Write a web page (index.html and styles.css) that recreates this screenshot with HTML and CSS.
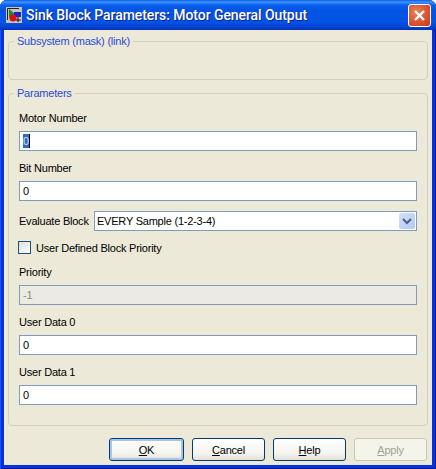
FILE: index.html
```html
<!DOCTYPE html>
<html lang="en">
  <head>
    <meta charset="UTF-8" />
    <title>Sink Block Parameters: Motor General Output</title>
    <link rel="stylesheet" href="styles.css">
  </head>

  <body>
    <div class="ventana">
      <div class="titulo">
        <svg class="titulo-icono" width="16" height="16" viewBox="0 0 16 16">
          <rect width="16" height="16" fill="#c8c4b8" />
          <path d="M1.5 13V1.5H13" fill="none" stroke="#222" />
          <path d="M3 2l6 5-6 4z" fill="#1a8a2a" />
          <rect x="8" y="5" width="7" height="5" fill="#2222cc" />
          <circle cx="7" cy="11" r="3.5" fill="#e01010" />
          <path d="M12 10v5M10 13h5" stroke="#111" />
        </svg>
        <span class="titulo-texto">Sink Block Parameters: Motor General Output</span>
        <button class="cerrar" type="button" aria-label="Close">
          <svg width="21" height="21" viewBox="0 0 21 21">
            <path d="M6 6l9 9M15 6l-9 9" stroke="#fff" stroke-width="2.4" />
          </svg>
        </button>
      </div>

      <div class="contenido">
        <fieldset class="grupo grupo-vacio">
          <legend>Subsystem (mask) (link)</legend>
        </fieldset>

        <fieldset class="grupo grupo-parametros">
          <legend>Parameters</legend>

          <div class="campo">
            <label>Motor Number</label>
            <div class="entrada"><span class="seleccion">0</span></div>
          </div>

          <div class="campo">
            <label for="bit">Bit Number</label>
            <input class="entrada" type="text" id="bit" value="0" />
          </div>

          <div class="fila-evaluar">
            <label for="evaluar">Evaluate Block</label>
            <div class="combo">
              <select id="evaluar">
                <option>EVERY Sample (1-2-3-4)</option>
              </select>
              <span class="combo-boton">
                <svg width="14" height="14" viewBox="0 0 14 14">
                  <path d="M3 5l4 4 4-4" fill="none" stroke="#4d6185" stroke-width="2" />
                </svg>
              </span>
            </div>
          </div>

          <div class="fila-check">
            <input type="checkbox" id="prioridad" />
            <label for="prioridad">User Defined Block Priority</label>
          </div>

          <div class="campo campo-prioridad">
            <label for="priority">Priority</label>
            <input class="entrada" type="text" id="priority" value="-1" disabled />
          </div>

          <div class="campo">
            <label for="dato0">User Data 0</label>
            <input class="entrada" type="text" id="dato0" value="0" />
          </div>

          <div class="campo">
            <label for="dato1">User Data 1</label>
            <input class="entrada" type="text" id="dato1" value="0" />
          </div>
        </fieldset>

        <div class="botones">
          <button type="button" class="boton boton-ok"><u>O</u>K</button>
          <button type="button" class="boton"><u>C</u>ancel</button>
          <button type="button" class="boton"><u>H</u>elp</button>
          <button type="button" class="boton" disabled><u>A</u>pply</button>
        </div>
      </div>
    </div>
  </body>
</html>
```

FILE: styles.css
```css
html,
body {
  margin: 0;
  padding: 0;
}

body {
  font-family: "Liberation Sans", Arial, sans-serif;
  font-size: 11px;
  letter-spacing: -0.22px;
  color: #000;
}

.ventana {
  width: 436px;
  height: 469px;
  box-sizing: border-box;
  display: flex;
  flex-direction: column;
  background: #0831d9;
  box-shadow: inset 1px 0 #0a5af0, inset -1px -1px #00189c;
  border-radius: 7px 7px 0 0;
  overflow: hidden;
}

.titulo {
  height: 30px;
  flex: none;
  display: flex;
  align-items: center;
  padding: 0 5px 0 6px;
  box-sizing: border-box;
  background: linear-gradient(#0a5ae0 0, #3d95ff 2px, #0a60ec 5px, #0454e4 10px, #0353e6 22px, #0345d0 27px, #0331b8 30px);
}

.titulo-icono {
  flex: none;
}

.titulo-texto {
  flex: 1;
  margin-left: 4px;
  font-family: Roboto, sans-serif;
  font-size: 14px;
  font-weight: 500;
  letter-spacing: -0.07px;
  color: #fff;
  text-shadow: 1px 1px 0 #0f1f8a;
  white-space: nowrap;
}

.cerrar {
  width: 21px;
  height: 21px;
  padding: 0;
  border: 1px solid #fff;
  border-radius: 3px;
  background: radial-gradient(circle at 35% 35%, #e8835f, #d8502c 60%, #c23a18);
  box-sizing: content-box;
  display: flex;
}

.contenido {
  flex: 1;
  margin: 0 4px 4px;
  padding: 4px 4px 0;
  background: #ece9d8;
  display: flex;
  flex-direction: column;
}

.grupo {
  margin: 0;
  padding: 0;
  border: 1px solid #d0d0bf;
  border-radius: 4px;
  min-width: 0;
}

.grupo legend {
  margin-left: 5px;
  padding: 0 3px 0 3px;
  color: #2a4bd7;
  line-height: 14px;
}

.grupo-vacio {
  height: 46px;
  box-sizing: border-box;
}

.grupo-parametros {
  margin-top: 6px;
  height: 340px;
  box-sizing: border-box;
  padding: 11px 10px 0;
}

.grupo-parametros legend {
  margin-left: -5px;
}

.campo label,
.fila-evaluar label,
.fila-check label {
  line-height: 14px;
  white-space: nowrap;
}

.campo {
  display: flex;
  flex-direction: column;
  gap: 6px;
  margin-bottom: 10px;
}

.entrada {
  height: 20px;
  box-sizing: border-box;
  margin: 0;
  padding: 0 0 0 3px;
  border: 1px solid #7f9db9;
  background: #fff;
  font: inherit;
  letter-spacing: inherit;
  color: #000;
  line-height: 18px;
  width: 100%;
  outline: none;
}

.entrada:disabled {
  background: #ebebe4;
  color: #8a8a80;
}

.seleccion {
  display: inline-block;
  height: 14px;
  margin-top: 2px;
  line-height: 14px;
  background: #316ac5;
  color: #cfe0ff;
  border-right: 1px solid #000;
}

.fila-evaluar {
  display: flex;
  align-items: center;
  gap: 5px;
  height: 20px;
}

.fila-evaluar label {
  width: 70px;
  flex: none;
}

.combo {
  flex: 1;
  height: 20px;
  box-sizing: border-box;
  border: 1px solid #7f9db9;
  background: #fff;
  display: flex;
  align-items: center;
  padding: 0 1px 0 0;
}

.combo select {
  flex: 1;
  min-width: 0;
  height: 18px;
  padding: 0 0 0 2px;
  border: none;
  outline: none;
  background: transparent;
  appearance: none;
  font: inherit;
  letter-spacing: inherit;
  color: #000;
}

.combo-boton {
  width: 16px;
  height: 16px;
  border-radius: 2px;
  background: linear-gradient(135deg, #d4e0fb, #b4c8f6);
  display: flex;
  align-items: center;
  justify-content: center;
}

.fila-check {
  display: flex;
  align-items: center;
  gap: 5px;
  height: 13px;
  margin-top: 10px;
}

.fila-check input {
  appearance: none;
  width: 13px;
  height: 13px;
  margin: 0 0 0 -1px;
  flex: none;
  border: 1px solid #1c5180;
  background: linear-gradient(135deg, #dcdcd7, #fff);
}

.campo-prioridad {
  margin-top: 11px;
}

.botones {
  display: flex;
  justify-content: flex-end;
  gap: 8px;
  margin-top: 12px;
  padding-right: 1px;
}

.boton {
  width: 73px;
  height: 23px;
  padding: 0;
  border: 1px solid #003c74;
  border-radius: 3px;
  background: linear-gradient(#fff, #f4f3ee 70%, #e3e0d4);
  font: inherit;
  letter-spacing: inherit;
  color: #000;
}

.boton-ok {
  width: 75px;
  box-shadow: inset 0 0 0 2px #a9c3ea;
}

.boton:disabled {
  border-color: #c9c7ba;
  background: #f5f4ea;
  color: #a1a192;
}
```
